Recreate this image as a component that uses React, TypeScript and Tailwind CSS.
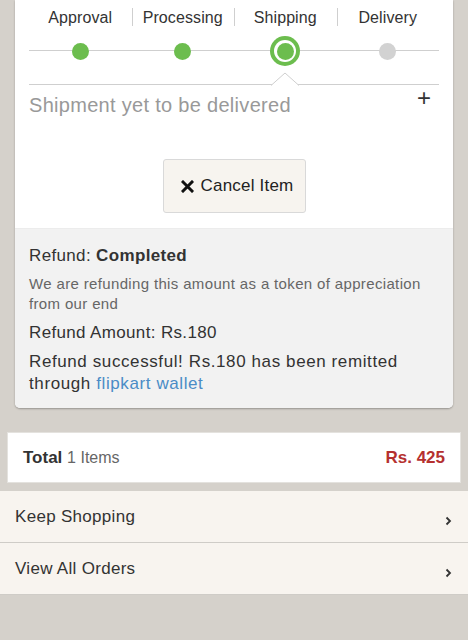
const STEPS = [
  { label: "Approval", state: "done" },
  { label: "Processing", state: "done" },
  { label: "Shipping", state: "current" },
  { label: "Delivery", state: "todo" },
];

const LINKS = ["Keep Shopping", "View All Orders"];

function StepDot({ state }: { state: string }) {
  if (state === "current") {
    return (
      <span className="flex h-[30px] w-[30px] items-center justify-center rounded-full bg-[#6cbd4e]">
        <span className="flex h-[22px] w-[22px] items-center justify-center rounded-full bg-white">
          <span className="h-[17px] w-[17px] rounded-full bg-[#6cbd4e]" />
        </span>
      </span>
    );
  }
  return (
    <span
      className={`h-[17px] w-[17px] rounded-full ${
        state === "done" ? "bg-[#6cbd4e]" : "bg-[#d2d2d2]"
      }`}
    />
  );
}

function Chevron() {
  return (
    <svg width="7" height="10" viewBox="0 0 7 10" className="mt-[8px]">
      <path d="M1.5 1.5 L5 5 L1.5 8.5" fill="none" stroke="#333" strokeWidth="1.8" />
    </svg>
  );
}

export default function App() {
  return (
    <div
      className="h-[640px] w-full overflow-hidden bg-[#d5d1cb] text-[#333]"
      style={{ fontFamily: '"Liberation Sans", Arial, sans-serif' }}
    >
      {/* Carte commande */}
      <div className="mx-[15px] overflow-hidden rounded-b-[5px] bg-white shadow-[0_1px_2px_rgba(0,0,0,0.3)]">
        <div className="px-[14px] pt-[7px]">
          {/* Étapes */}
          <div className="grid grid-cols-4">
            {STEPS.map((s, i) => (
              <div key={s.label} className="relative flex h-[22px] items-center justify-center">
                {i > 0 && <span className="absolute left-0 top-[1px] h-[18px] w-px bg-[#cfcfcf]" />}
                <span className="text-[16px] leading-[22px] tracking-[0.1px] text-[#333]">{s.label}</span>
              </div>
            ))}
          </div>

          <div className="relative mt-[-1px] grid h-[46px] grid-cols-4 items-center">
            <span className="absolute left-0 right-0 top-[22px] h-px bg-[#cfcfcf]" />
            {STEPS.map((s) => (
              <div key={s.label} className="relative flex justify-center">
                <StepDot state={s.state} />
              </div>
            ))}
          </div>

          {/* Séparateur avec encoche */}
          <div className="relative mt-[10px] grid grid-cols-4 border-t border-[#cfcfcf]">
            <div />
            <div />
            <div className="relative flex justify-center">
              <svg width="28" height="14" viewBox="0 0 28 14" className="absolute top-[-13px]">
                <path d="M0 13.5 L14 1 L28 13.5 Z" fill="white" />
                <path d="M0 13.5 L14 1 L28 13.5" fill="none" stroke="#cfcfcf" strokeWidth="1" />
              </svg>
            </div>
            <div />
          </div>

          <div className="mt-[8px] flex items-start justify-between">
            <p className="text-[20px] leading-[24px] tracking-[0.3px] text-[#999]">Shipment yet to be delivered</p>
            <span className="mr-[8px] mt-[-7px] text-[24px] leading-[24px] text-[#333]">+</span>
          </div>

          <div className="mb-[15px] mt-[42px] flex justify-center">
            <button className="flex h-[54px] w-[143px] items-center justify-center gap-[7px] rounded-[3px] border border-[#d9d9d9] bg-[#f7f4ef] pl-[6px] text-[17px] tracking-[0.2px] text-[#222]">
              <svg width="13" height="13" viewBox="0 0 13 13">
                <path d="M2 2 L11 11 M11 2 L2 11" stroke="#111" strokeWidth="3" strokeLinecap="square" />
              </svg>
              Cancel Item
            </button>
          </div>
        </div>

        {/* Remboursement */}
        <div className="border-t border-[#ececec] bg-[#f2f2f2] px-[14px] pb-[13px] pt-[15px] tracking-[0.35px]">
          <p className="text-[17px] leading-[24px]">
            Refund: <strong className="font-bold">Completed</strong>
          </p>
          <p className="mt-[6px] max-w-[400px] text-[15px] leading-[20px] text-[#666]">
            We are refunding this amount as a token of appreciation from our end
          </p>
          <p className="mt-[7px] text-[17px] leading-[24px]">Refund Amount: Rs.180</p>
          <p className="mt-[6px] max-w-[395px] text-[17px] leading-[22px] tracking-[0.6px]">
            Refund successful! Rs.180 has been remitted through{" "}
            <span className="text-[#4a8cc6]">flipkart wallet</span>
          </p>
        </div>
      </div>

      {/* Total */}
      <div className="mx-[7px] mt-[24px] flex h-[51px] items-center justify-between border border-[#e4e2de] bg-white px-[15px]">
        <p className="text-[17px]">
          <strong className="font-bold text-[#333]">Total</strong>{" "}
          <span className="text-[16px] text-[#666]">1 Items</span>
        </p>
        <span className="text-[17px] font-bold text-[#b5302f]">Rs. 425</span>
      </div>

      <div className="mt-[8px]">
        {LINKS.map((l) => (
          <div
            key={l}
            className="flex h-[52px] items-center justify-between border-b border-[#cfccc7] bg-[#f8f4ef] pl-[15px] pr-[16px]"
          >
            <span className="text-[17px] tracking-[0.3px] text-[#333]">{l}</span>
            <Chevron />
          </div>
        ))}
      </div>
    </div>
  );
}
